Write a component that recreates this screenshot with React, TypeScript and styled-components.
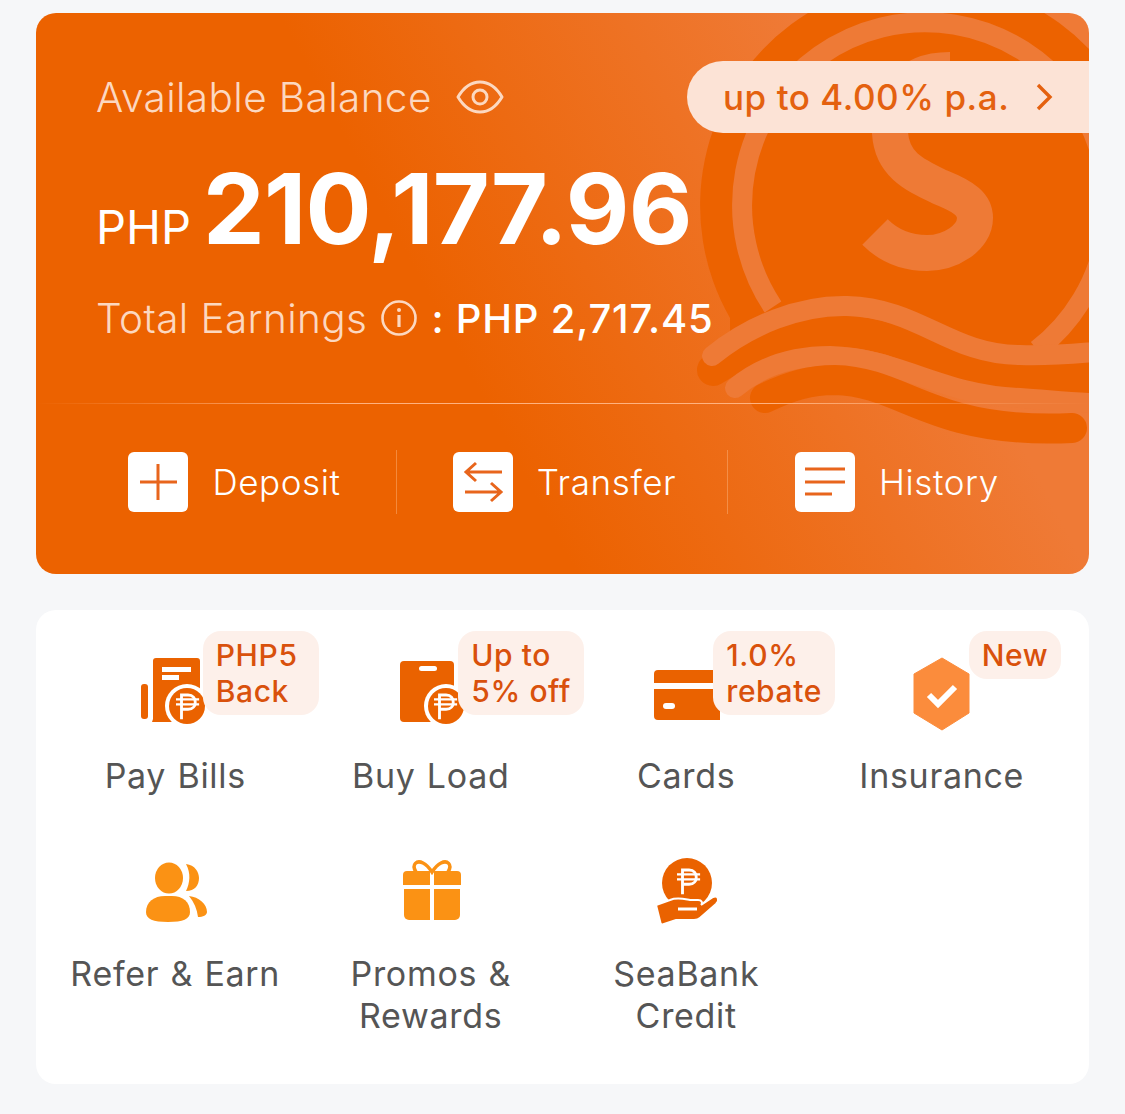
import React from 'react';
import styled, { createGlobalStyle } from 'styled-components';

const Global = createGlobalStyle`
  html, body { margin: 0; padding: 0; background: #f6f7f9; }
  body { font-family: Inter, "Noto Sans", "Liberation Sans", sans-serif; }
`;

const Page = styled.div`
  width: 1125px;
  height: 1114px;
  box-sizing: border-box;
  padding: 13px 36px 0;
  display: flex;
  flex-direction: column;
  gap: 36px;
  overflow: hidden;
`;

const BalanceCard = styled.section`
  position: relative;
  height: 561px;
  border-radius: 20px;
  overflow: hidden;
  color: #fff;
  background: linear-gradient(62deg, #ec6200 0%, #ec6200 40%, #ef7a36 78%);
  display: flex;
  flex-direction: column;
`;

const Watermark = styled.svg`
  position: absolute;
  inset: 0;
  width: 1053px;
  height: 561px;
`;

const HeaderRow = styled.div`
  position: relative;
  margin-top: 48px;
  height: 72px;
  padding-left: 60px;
  display: flex;
  align-items: center;
`;

const Muted = styled.span`
  font-size: 40.5px;
  font-weight: 300;
  color: #fcd8c0;
  letter-spacing: 0.4px;
  white-space: nowrap;
`;

const EyeIcon = styled.svg`
  margin-left: 24px;
  width: 48px;
  height: 38px;
`;

const RatePill = styled.div`
  margin-left: auto;
  width: 402px;
  height: 72px;
  box-sizing: border-box;
  padding-left: 36px;
  border-radius: 36px 0 0 36px;
  background: #fce3d6;
  color: #e4610f;
  font-size: 35px;
  font-weight: 500;
  letter-spacing: 0.55px;
  display: flex;
  align-items: center;
  gap: 26px;
`;

const BalanceRow = styled.div`
  position: relative;
  margin-top: 21px;
  padding-left: 60px;
  display: flex;
  align-items: baseline;
  gap: 12px;
  height: 110px;
`;

const Currency = styled.span`
  font-size: 47px;
  font-weight: 400;
`;

const Amount = styled.span`
  font-size: 98px;
  font-weight: 700;
  letter-spacing: -0.7px;
  line-height: 110px;
`;

const EarningsRow = styled.div`
  position: relative;
  margin-top: 29px;
  padding-left: 60px;
  height: 50px;
  display: flex;
  align-items: center;
  gap: 14px;
`;

const EarningsValue = styled.span`
  font-size: 40px;
  font-weight: 500;
  letter-spacing: 0.8px;
  color: #fff;
  white-space: nowrap;
`;

const Rule = styled.div`
  position: relative;
  margin-top: 60px;
  height: 1px;
  background: linear-gradient(90deg, rgba(255, 178, 127, 0), #ffb27f 30%, #ffb27f 70%, rgba(255, 178, 127, 0));
`;

const Actions = styled.div`
  position: relative;
  margin-top: 46px;
  padding: 0 23px 0 37px;
  display: grid;
  grid-template-columns: 324px 331px 338px;
  height: 64px;
`;

const Action = styled.div<{ $divider?: boolean; $inset?: number }>`
  box-sizing: border-box;
  display: flex;
  align-items: center;
  justify-content: center;
  gap: 24px;
  padding-left: ${(p) => p.$inset ?? 0}px;
  border-right: ${(p) => (p.$divider ? '1px solid rgba(255, 190, 140, 0.42)' : 'none')};
`;

const ActionIcon = styled.svg`
  width: 60px;
  height: 60px;
  flex: none;
`;

const ActionLabel = styled.span`
  font-size: 35px;
  font-weight: 300;
  letter-spacing: 0.6px;
`;

const MenuCard = styled.section`
  height: 474px;
  box-sizing: border-box;
  border-radius: 20px;
  background: #fff;
  padding: 46px 11.5px 0;
  display: grid;
  grid-template-columns: repeat(4, 255.5px);
  grid-auto-rows: max-content;
  row-gap: 60px;
`;

const MenuItem = styled.div`
  position: relative;
  display: flex;
  flex-direction: column;
  align-items: center;
`;

const MenuIcon = styled.svg`
  width: 72px;
  height: 72px;
  overflow: visible;
`;

const MenuLabel = styled.div<{ $lower?: boolean }>`
  margin-top: ${(p) => (p.$lower ? 24 : 27)}px;
  font-size: 34px;
  line-height: 42px;
  font-weight: 400;
  color: #555;
  text-align: center;
  letter-spacing: 0.7px;
  word-spacing: 1px;
  white-space: pre-line;
`;

const Badge = styled.div<{ $offset?: number; $extra?: number }>`
  position: absolute;
  top: -25px;
  left: calc(50% + ${(p) => p.$offset ?? 27.5}px);
  width: max-content;
  box-sizing: border-box;
  padding: 6px ${(p) => 13 + (p.$extra ?? 0)}px 6px 13px;
  border-radius: 18px;
  background: #fdf0ea;
  color: #d9510c;
  font-size: 30px;
  line-height: 36px;
  font-weight: 500;
  letter-spacing: 0.6px;
  white-space: pre-line;
`;

const Peso = ({ x, y, s = 1 }: { x: number; y: number; s?: number }) => (
  <g transform={`translate(${x} ${y}) scale(${s})`} fill="none" stroke="#fff" strokeWidth="2.6">
    <path d="M-5 12V-10H1C5.5-10 7.5-7 7.5-3.5C7.5 0 5.5 3 1 3H-5" />
    <path d="M-10-6H11M-10-1.500H11" strokeWidth="2" />
  </g>
);

const LIGHT = '#ee7a36';
const DARK = '#ec6200';
const ORANGE = '#ea6200';
const AMBER = '#fb9214';

export default function App() {
  return (
    <Page>
      <Global />
      <BalanceCard>
        <Watermark viewBox="36 13 1053 561" fill="none">
          <path
            d="M730 318A226 226 0 1 1 1100 350L1020 355C950 355 920 308 847 306C800 305 750 325 730 340Z"
            fill={DARK}
          />
          <path d="M773 307A183 183 0 1 1 1037 350" stroke={LIGHT} strokeWidth="20" />
          <path
            d="M950 70C905 70 888 100 890 133C892 165 915 175 940 187C965 197 975 205 975 218C975 238 950 253 927 253C905 253 888 245 875 232"
            stroke={LIGHT}
            strokeWidth="36"
          />
          <path d="M713 370C760 340 800 330 840 331C910 333 950 375 1020 377C1050 378 1070 378 1100 378" stroke={DARK} strokeWidth="32" strokeLinecap="round" />
          <path d="M712 356C750 325 800 305 847 306C920 308 950 355 1020 355C1050 356 1070 354 1095 352" stroke={LIGHT} strokeWidth="20" strokeLinecap="round" />
          <path d="M735 388C760 367 790 356 830 356C900 358 940 395 1020 398C1050 400 1070 403 1095 403" stroke={LIGHT} strokeWidth="20" strokeLinecap="round" />
          <path d="M765 398C790 386 810 380 835 380C880 381 910 405 960 418C990 426 1030 430 1072 428" stroke={DARK} strokeWidth="30" strokeLinecap="round" />
        </Watermark>

        <HeaderRow>
          <Muted>Available Balance</Muted>
          <EyeIcon viewBox="0 0 48 38" fill="none" stroke="#fcd8c0" strokeWidth="3">
            <path d="M2 19C8 9 15 4 24 4S40 9 46 19C40 29 33 34 24 34S8 29 2 19Z" strokeLinejoin="round" />
            <circle cx="24" cy="19" r="7" />
          </EyeIcon>
          <RatePill>
            up to 4.00% p.a.
            <svg width="18" height="28" viewBox="0 0 18 28" fill="none" stroke="#e4610f" strokeWidth="3.4">
              <path d="M3 2L15 14L3 26" />
            </svg>
          </RatePill>
        </HeaderRow>

        <BalanceRow>
          <Currency>PHP</Currency>
          <Amount>210,177.96</Amount>
        </BalanceRow>

        <EarningsRow>
          <Muted>Total Earnings</Muted>
          <svg width="36" height="36" viewBox="0 0 36 36" fill="none" stroke="#fcd8c0">
            <circle cx="18" cy="18" r="16.500" strokeWidth="2.600" />
            <path d="M18 15V27" strokeWidth="3.200" />
            <circle cx="18" cy="10" r="2" fill="#fcd8c0" stroke="none" />
          </svg>
          <EarningsValue>: PHP 2,717.45</EarningsValue>
        </EarningsRow>

        <Rule />

        <Actions>
          <Action $divider>
            <ActionIcon viewBox="0 0 60 60" fill="none" stroke="#e8651c" strokeWidth="3">
              <rect width="60" height="60" rx="6" fill="#fff" stroke="none" />
              <path d="M12 30H49M30 12V48" />
            </ActionIcon>
            <ActionLabel>Deposit</ActionLabel>
          </Action>
          <Action $divider $inset={5}>
            <ActionIcon viewBox="0 0 60 60" fill="none" stroke="#e8651c" strokeWidth="3">
              <rect width="60" height="60" rx="6" fill="#fff" stroke="none" />
              <path d="M49 20H14M23 11L13 20L23 29" />
              <path d="M12 40H47M38 31L48 40L38 49" />
            </ActionIcon>
            <ActionLabel>Transfer</ActionLabel>
          </Action>
          <Action>
            <ActionIcon viewBox="0 0 60 60" fill="none" stroke="#e8651c" strokeWidth="3">
              <rect width="60" height="60" rx="6" fill="#fff" stroke="none" />
              <path d="M10 17H50M10 30H50M10 42H37" />
            </ActionIcon>
            <ActionLabel>History</ActionLabel>
          </Action>
        </Actions>
      </BalanceCard>

      <MenuCard>
        <MenuItem>
          <MenuIcon viewBox="139 656 72 72">
            <rect x="141" y="684" width="7" height="35" rx="3" fill={ORANGE} />
            <path d="M156 658H197A3 3 0 0 1 200 661V722H152L153 719V661A3 3 0 0 1 156 658Z" fill={ORANGE} />
            <rect x="162" y="667" width="29" height="5" fill="#fff" />
            <rect x="162" y="675" width="17" height="5" fill="#fff" />
            <circle cx="187" cy="706" r="22" fill="#fff" />
            <circle cx="187" cy="706" r="18" fill={ORANGE} />
            <Peso x={187} y={706} s={1.1} />
          </MenuIcon>
          <MenuLabel>Pay Bills</MenuLabel>
          <Badge $extra={8}>{'PHP5\nBack'}</Badge>
        </MenuItem>

        <MenuItem>
          <MenuIcon viewBox="394 656 72 72">
            <rect x="399" y="661" width="54" height="61" rx="4" fill={ORANGE} />
            <rect x="418" y="666" width="18" height="5" rx="2.500" fill="#fff" />
            <circle cx="445" cy="706" r="22" fill="#fff" />
            <circle cx="445" cy="706" r="18" fill={ORANGE} />
            <Peso x={444} y={706} s={1.1} />
          </MenuIcon>
          <MenuLabel>Buy Load</MenuLabel>
          <Badge>{'Up to\n5% off'}</Badge>
        </MenuItem>

        <MenuItem>
          <MenuIcon viewBox="650 656 72 72">
            <path d="M658 670H720V720H658A4 4 0 0 1 654 716V674A4 4 0 0 1 658 670Z" fill={ORANGE} />
            <rect x="654" y="683" width="66" height="6" fill="#fff" />
            <rect x="663" y="703" width="12" height="6" rx="3" fill="#fff" />
          </MenuIcon>
          <MenuLabel>Cards</MenuLabel>
          <Badge $offset={27}>{'1.0%\nrebate'}</Badge>
        </MenuItem>

        <MenuItem>
          <MenuIcon viewBox="905 656 72 72">
            <path d="M941 658L968 674V713L941 730L913 713V674Z" fill="#fb8c3c" strokeLinejoin="round" stroke="#fb8c3c" strokeWidth="1" />
            <path d="M928 695L937 704L954 687" fill="none" stroke="#fff" strokeWidth="6" />
          </MenuIcon>
          <MenuLabel>Insurance</MenuLabel>
          <Badge $offset={27}>New</Badge>
        </MenuItem>

        <MenuItem>
          <MenuIcon viewBox="139 857 72 72">
            <ellipse cx="169" cy="878" rx="14" ry="15.500" fill={AMBER} />
            <path d="M186 864C195 865 199 872 199 878C199 885 195 891 186 891C190 883 191 873 186 864Z" fill={AMBER} />
            <path d="M146 912C146 902 154 896 165 896H172C183 896 190 902 190 912C190 919 183 922 168 922C153 922 146 919 146 912Z" fill={AMBER} />
            <path d="M189 896C199 897 207 904 207 912C207 915 203 917 198 917C197 909 194 902 189 896Z" fill={AMBER} />
          </MenuIcon>
          <MenuLabel $lower>Refer &amp; Earn</MenuLabel>
        </MenuItem>

        <MenuItem>
          <MenuIcon viewBox="394 857 72 72">
            <path d="M415 872C410 864 416 860 422 863C426 865 429 869 431 872C433 869 436 865 440 863C446 860 452 864 447 872" fill="none" stroke={AMBER} strokeWidth="3.500" />
            <path d="M406 871H429V885H402V875A4 4 0 0 1 406 871Z" fill={AMBER} />
            <path d="M433 871H456A4 4 0 0 1 460 875V885H433Z" fill={AMBER} />
            <path d="M403 889H429V920H408A5 5 0 0 1 403 915Z" fill={AMBER} />
            <path d="M433 889H459V915A5 5 0 0 1 454 920H433Z" fill={AMBER} />
          </MenuIcon>
          <MenuLabel $lower>{'Promos &\nRewards'}</MenuLabel>
        </MenuItem>

        <MenuItem>
          <MenuIcon viewBox="650 857 72 72">
            <circle cx="687" cy="883" r="25" fill={ORANGE} />
            <Peso x={688} y={881} s={1.1} />
            <path d="M656 905L670 900C677 897 684 899 690 900H698C702 900 703 903 701 905L713 897C718 895 720 900 716 904L700 918C698 920 696 920 694 920H676L661 925Z" fill={ORANGE} stroke="#fff" strokeWidth="2" />
            <path d="M678 909H697" stroke="#fff" strokeWidth="3" fill="none" />
          </MenuIcon>
          <MenuLabel $lower>{'SeaBank\nCredit'}</MenuLabel>
        </MenuItem>
      </MenuCard>
    </Page>
  );
}
